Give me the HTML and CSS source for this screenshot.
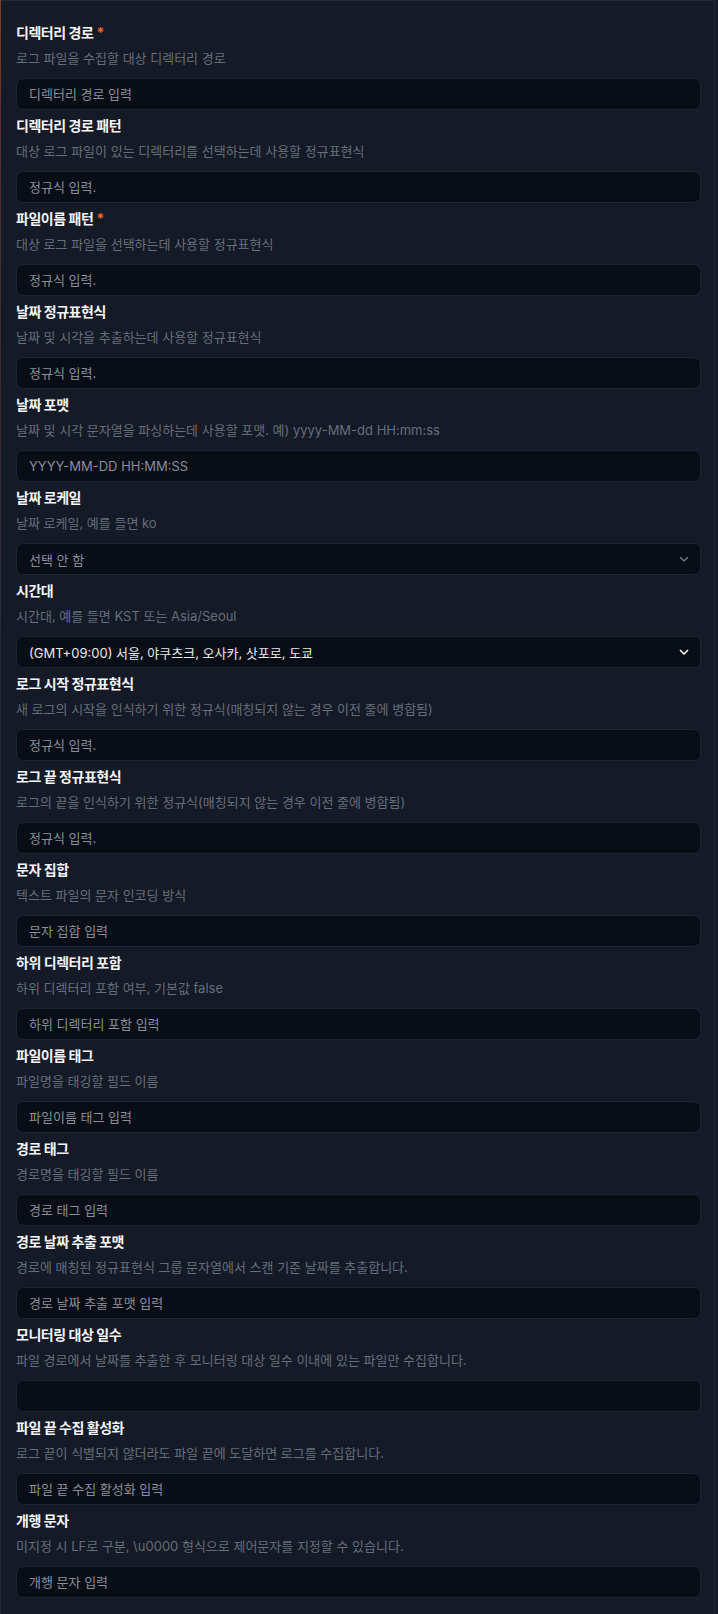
FILE: index.html
```html
<!DOCTYPE html>
<html lang="ko">
<head>
    <meta charset="UTF-8">
    <meta name="viewport" content="width=device-width, initial-scale=1.0">
    <title>로그 수집 설정</title>
    <link rel="stylesheet" href="styles.css">
</head>
<body>
    <div class="panel">
        <div class="field">
            <label class="label">디렉터리 경로<span class="req">*</span></label>
            <p class="desc">로그 파일을 수집할 대상 디렉터리 경로</p>
            <input class="input" type="text" placeholder="디렉터리 경로 입력">
        </div>
        <div class="field">
            <label class="label">디렉터리 경로 패턴</label>
            <p class="desc">대상 로그 파일이 있는 디렉터리를 선택하는데 사용할 정규표현식</p>
            <input class="input" type="text" placeholder="정규식 입력.">
        </div>
        <div class="field">
            <label class="label">파일이름 패턴<span class="req">*</span></label>
            <p class="desc">대상 로그 파일을 선택하는데 사용할 정규표현식</p>
            <input class="input" type="text" placeholder="정규식 입력.">
        </div>
        <div class="field">
            <label class="label">날짜 정규표현식</label>
            <p class="desc">날짜 및 시각을 추출하는데 사용할 정규표현식</p>
            <input class="input" type="text" placeholder="정규식 입력.">
        </div>
        <div class="field">
            <label class="label">날짜 포맷</label>
            <p class="desc">날짜 및 시각 문자열을 파싱하는데 사용할 포맷. 예) yyyy-MM-dd HH:mm:ss</p>
            <input class="input" type="text" placeholder="YYYY-MM-DD HH:MM:SS">
        </div>
        <div class="field">
            <label class="label">날짜 로케일</label>
            <p class="desc">날짜 로케일, 예를 들면 ko</p>
            <div class="select empty">
                <span>선택 안 함</span>
                <svg class="chevron" width="12" height="12" viewBox="0 0 12 12"><path d="M2.5 4.5 6 8l3.5-3.5" fill="none" stroke="currentColor" stroke-width="1.5" stroke-linecap="round" stroke-linejoin="round"/></svg>
            </div>
        </div>
        <div class="field">
            <label class="label">시간대</label>
            <p class="desc">시간대, 예를 들면 KST 또는 Asia/Seoul</p>
            <div class="select">
                <span>(GMT+09:00) 서울, 야쿠츠크, 오사카, 삿포로, 도쿄</span>
                <svg class="chevron" width="12" height="12" viewBox="0 0 12 12"><path d="M2.5 4.5 6 8l3.5-3.5" fill="none" stroke="currentColor" stroke-width="1.75" stroke-linecap="round" stroke-linejoin="round"/></svg>
            </div>
        </div>
        <div class="field">
            <label class="label">로그 시작 정규표현식</label>
            <p class="desc">새 로그의 시작을 인식하기 위한 정규식(매칭되지 않는 경우 이전 줄에 병합됨)</p>
            <input class="input" type="text" placeholder="정규식 입력.">
        </div>
        <div class="field">
            <label class="label">로그 끝 정규표현식</label>
            <p class="desc">로그의 끝을 인식하기 위한 정규식(매칭되지 않는 경우 이전 줄에 병합됨)</p>
            <input class="input" type="text" placeholder="정규식 입력.">
        </div>
        <div class="field">
            <label class="label">문자 집합</label>
            <p class="desc">텍스트 파일의 문자 인코딩 방식</p>
            <input class="input" type="text" placeholder="문자 집합 입력">
        </div>
        <div class="field">
            <label class="label">하위 디렉터리 포함</label>
            <p class="desc">하위 디렉터리 포함 여부, 기본값 false</p>
            <input class="input" type="text" placeholder="하위 디렉터리 포함 입력">
        </div>
        <div class="field">
            <label class="label">파일이름 태그</label>
            <p class="desc">파일명을 태깅할 필드 이름</p>
            <input class="input" type="text" placeholder="파일이름 태그 입력">
        </div>
        <div class="field">
            <label class="label">경로 태그</label>
            <p class="desc">경로명을 태깅할 필드 이름</p>
            <input class="input" type="text" placeholder="경로 태그 입력">
        </div>
        <div class="field">
            <label class="label">경로 날짜 추출 포맷</label>
            <p class="desc">경로에 매칭된 정규표현식 그룹 문자열에서 스캔 기준 날짜를 추출합니다.</p>
            <input class="input" type="text" placeholder="경로 날짜 추출 포맷 입력">
        </div>
        <div class="field">
            <label class="label">모니터링 대상 일수</label>
            <p class="desc">파일 경로에서 날짜를 추출한 후 모니터링 대상 일수 이내에 있는 파일만 수집합니다.</p>
            <input class="input" type="text">
        </div>
        <div class="field">
            <label class="label">파일 끝 수집 활성화</label>
            <p class="desc">로그 끝이 식별되지 않더라도 파일 끝에 도달하면 로그를 수집합니다.</p>
            <input class="input" type="text" placeholder="파일 끝 수집 활성화 입력">
        </div>
        <div class="field">
            <label class="label">개행 문자</label>
            <p class="desc">미지정 시 LF로 구분, \u0000 형식으로 제어문자를 지정할 수 있습니다.</p>
            <input class="input" type="text" placeholder="개행 문자 입력">
        </div>
    </div>
</body>
</html>
```

FILE: styles.css
```css
body {
    margin: 0;
    background: #141a26;
    font-family: 'Inter', 'Noto Sans CJK KR', sans-serif;
    color: #f3f4f6;
}
.panel {
    position: relative;
    width: 715px;
    min-height: 1614px;
    box-sizing: border-box;
    padding: 22px 13px 0 15px;
    border: 1px solid #222938;
    border-bottom: none;
    background: #141a26;
}
/* reddish accent on the left edge */
.panel::before {
    content: "";
    position: absolute;
    left: -1px;
    top: -1px;
    bottom: 0;
    width: 1px;
    background: linear-gradient(to bottom, #7a3a2e 0, #4a2d2e 200px, #252a38 700px);
}
.field {
    margin-bottom: 6px;
}
.label {
    display: block;
    font-size: 14px;
    font-weight: 700;
    line-height: 20px;
    letter-spacing: -0.45px;
    color: #f5f6f8;
    margin-bottom: 5px;
}
.req {
    color: #f0642d;
    margin-left: 3px;
}
.desc {
    margin: 0 0 10px;
    font-size: 13px;
    line-height: 20px;
    color: #676e7b;
}
.input, .select {
    display: flex;
    align-items: center;
    width: 100%;
    height: 32px;
    box-sizing: border-box;
    padding: 0 12px;
    background: #090d16;
    border: 1px solid #1d2434;
    border-radius: 7px;
    font-family: inherit;
    font-size: 13px;
    color: #e8eaee;
    outline: none;
}
.input::placeholder {
    color: #8a8f99;
}
.select {
    justify-content: space-between;
    padding-right: 10px;
}
.select.empty {
    color: #8a8f99;
}
.chevron {
    flex: none;
    color: #f3f4f6;
}
.select.empty .chevron {
    color: #6b7280;
}
```
